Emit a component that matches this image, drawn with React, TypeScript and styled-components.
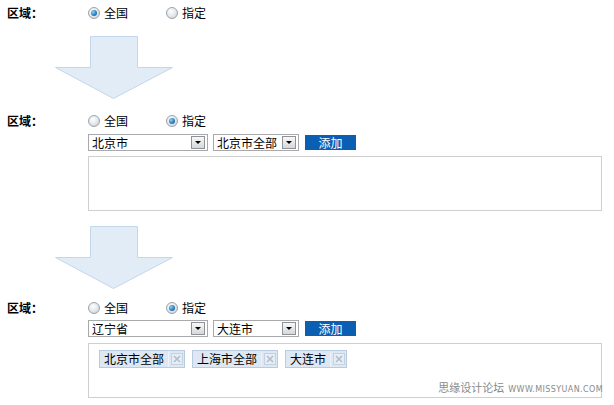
import React from "react";
import styled, { createGlobalStyle } from "styled-components";

const GlobalStyle = createGlobalStyle`
  html, body { margin: 0; padding: 0; background: #fff; }
  body {
    font-family: "Noto Sans CJK SC", "Noto Sans", sans-serif;
    font-size: 12px;
    color: #000;
  }
`;

const Page = styled.div`
  position: relative;
  width: 614px;
  height: 405px;
  overflow: hidden;
  padding-left: 7px;
  box-sizing: border-box;
`;

const Section = styled.div<{ $top: number }>`
  display: grid;
  grid-template-columns: 81px 514px;
  margin-top: ${(p) => p.$top}px;
`;

const Label = styled.div`
  font-weight: bold;
  height: 18px;
  line-height: 18px;
`;

const Content = styled.div`
  display: flex;
  flex-direction: column;
`;

const RadioRow = styled.div`
  display: flex;
  align-items: center;
  height: 18px;
  gap: 38px;
`;

const RadioItem = styled.label`
  display: flex;
  align-items: center;
  gap: 4px;
  line-height: 18px;
`;

const RadioCircle = styled.span<{ $checked?: boolean }>`
  width: 10px;
  height: 10px;
  border-radius: 50%;
  border: 1px solid #9aa3ad;
  background: radial-gradient(circle at 40% 35%, #ffffff 0%, #e3e5e8 55%, #c4c8cd 100%);
  display: flex;
  align-items: center;
  justify-content: center;
  &::after {
    content: "";
    display: ${(p) => (p.$checked ? "block" : "none")};
    width: 6px;
    height: 6px;
    border-radius: 50%;
    background: radial-gradient(circle at 35% 35%, #8fd0f5 0%, #2a7fc0 55%, #0d4f8c 100%);
  }
`;

const SelectRow = styled.div<{ $top: number }>`
  display: flex;
  align-items: center;
  margin-top: ${(p) => p.$top}px;
  height: 17px;
`;

const Select = styled.div<{ $w: number; $gap: number }>`
  width: ${(p) => p.$w}px;
  height: 17px;
  box-sizing: border-box;
  border: 1px solid #a7a9ac;
  background: #fff;
  display: flex;
  align-items: center;
  justify-content: space-between;
  padding: 0 2px 0 3px;
  margin-right: ${(p) => p.$gap}px;
  line-height: 15px;
`;

const DropButton = styled.span`
  width: 14px;
  height: 13px;
  box-sizing: border-box;
  border: 1px solid #8e9296;
  background: linear-gradient(#f8f8f8, #d6d7d9);
  display: flex;
  align-items: center;
  justify-content: center;
  &::after {
    content: "";
    border-left: 3px solid transparent;
    border-right: 3px solid transparent;
    border-top: 3px solid #000;
  }
`;

const AddButton = styled.button`
  width: 51px;
  height: 15px;
  border: none;
  padding: 0;
  background: #0b5fb3;
  color: #fff;
  font-family: inherit;
  font-size: 12px;
  line-height: 15px;
`;

const Box = styled.div<{ $top: number }>`
  margin-top: ${(p) => p.$top}px;
  width: 514px;
  height: 55px;
  box-sizing: border-box;
  border: 1px solid #cfcfcf;
  padding: 6px 10px;
  display: flex;
  align-items: flex-start;
  gap: 7px;
`;

const Tag = styled.span`
  display: flex;
  align-items: stretch;
  height: 18px;
  box-sizing: border-box;
  border: 1px solid #b8cbe0;
  background: #dde8f4;
  line-height: 16px;
`;

const TagText = styled.span`
  padding: 0 4px;
`;

const TagClose = styled.span`
  width: 15px;
  display: flex;
  align-items: center;
  justify-content: center;
  border-left: 1px solid #eef3f9;
`;

const ArrowWrap = styled.div<{ $top: number }>`
  margin-top: ${(p) => p.$top}px;
  margin-left: 48px;
  width: 118px;
  height: 64px;
`;

const Watermark = styled.div`
  position: absolute;
  right: 11px;
  bottom: 10px;
  display: flex;
  align-items: baseline;
  gap: 4px;
  color: #8a8a8a;
`;

const WmCn = styled.span`
  font-size: 11px;
`;

const WmEn = styled.span`
  font-family: "DejaVu Sans", sans-serif;
  font-size: 8px;
  letter-spacing: 0.4px;
`;

const Arrow = ({ top }: { top: number }) => (
  <ArrowWrap $top={top}>
    <svg width="118" height="64" viewBox="0 0 118 64">
      <polygon
        points="35.5,0.5 82.5,0.5 82.5,31.5 117.5,31.5 58.5,62.5 0.5,31.5 35.5,31.5"
        fill="#e2ecf7"
        stroke="#c3d6ea"
        strokeWidth="1"
      />
    </svg>
  </ArrowWrap>
);

const CloseIcon = () => (
  <TagClose>
    <svg width="12" height="12" viewBox="0 0 12 12">
      <rect x="0.5" y="0.5" width="11" height="11" fill="#e6edf6" stroke="#c5d1df" />
      <path d="M3 3 L9 9 M9 3 L3 9" stroke="#b2bdcb" strokeWidth="1.6" />
    </svg>
  </TagClose>
);

const Radios = ({ specified }: { specified: boolean }) => (
  <RadioRow>
    <RadioItem>
      <RadioCircle $checked={!specified} />
      全国
    </RadioItem>
    <RadioItem>
      <RadioCircle $checked={specified} />
      指定
    </RadioItem>
  </RadioRow>
);

export default function App() {
  return (
    <>
      <GlobalStyle />
      <Page>
        <Section $top={4}>
          <Label>区域：</Label>
          <Content>
            <Radios specified={false} />
          </Content>
        </Section>

        <Arrow top={14} />

        <Section $top={12}>
          <Label>区域：</Label>
          <Content>
            <Radios specified={true} />
            <SelectRow $top={4}>
              <Select $w={120} $gap={5}>
                北京市
                <DropButton />
              </Select>
              <Select $w={86} $gap={6}>
                北京市全部
                <DropButton />
              </Select>
              <AddButton>添加</AddButton>
            </SelectRow>
            <Box $top={5} />
          </Content>
        </Section>

        <Arrow top={15} />

        <Section $top={9}>
          <Label>区域：</Label>
          <Content>
            <Radios specified={true} />
            <SelectRow $top={3}>
              <Select $w={120} $gap={5}>
                辽宁省
                <DropButton />
              </Select>
              <Select $w={86} $gap={6}>
                大连市
                <DropButton />
              </Select>
              <AddButton>添加</AddButton>
            </SelectRow>
            <Box $top={6}>
              <Tag>
                <TagText>北京市全部</TagText>
                <CloseIcon />
              </Tag>
              <Tag>
                <TagText>上海市全部</TagText>
                <CloseIcon />
              </Tag>
              <Tag>
                <TagText>大连市</TagText>
                <CloseIcon />
              </Tag>
            </Box>
          </Content>
        </Section>

        <Watermark>
          <WmCn>思缘设计论坛</WmCn>
          <WmEn>WWW.MISSYUAN.COM</WmEn>
        </Watermark>
      </Page>
    </>
  );
}
